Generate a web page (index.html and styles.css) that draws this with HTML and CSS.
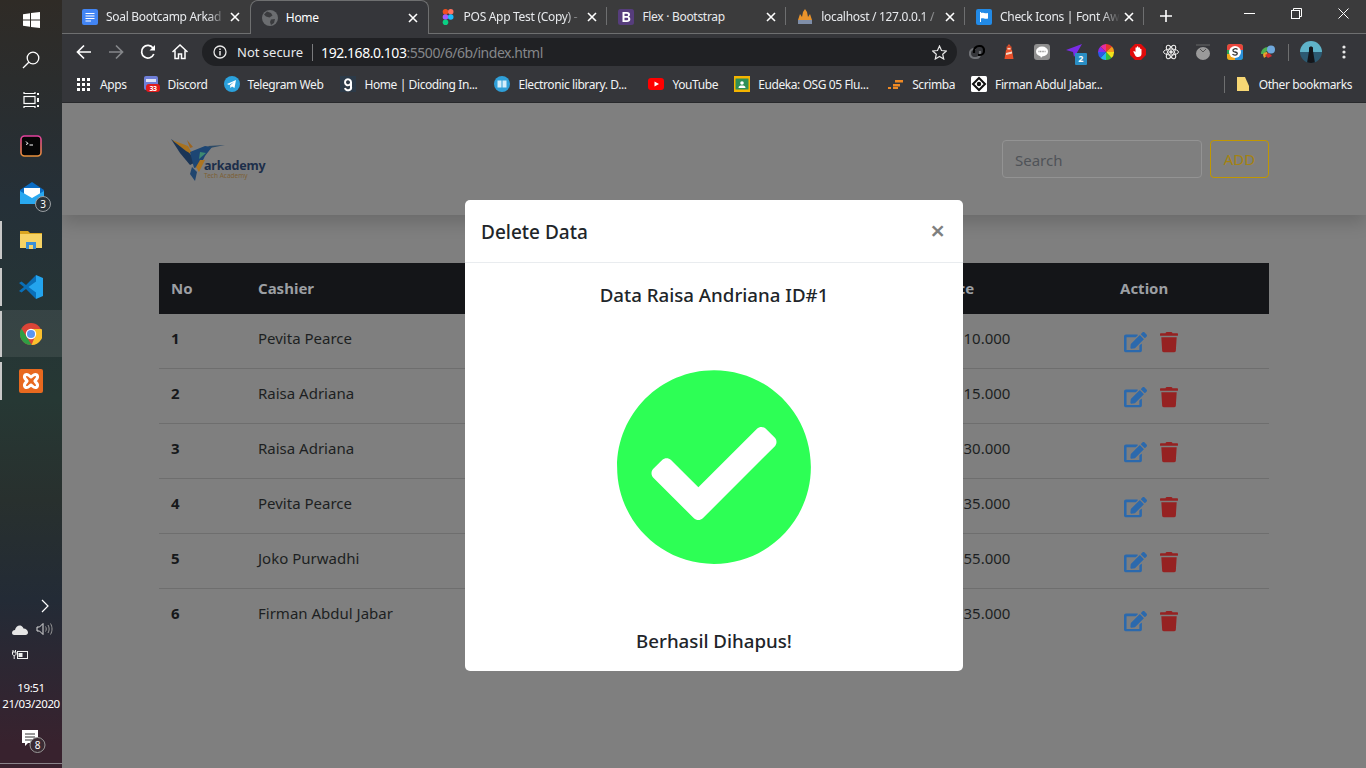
FILE: index.html
```html
<!DOCTYPE html>
<html lang="en">
<head>
  <meta charset="UTF-8">
  <title>Home</title>
  <link rel="stylesheet" href="styles.css">
</head>
<body>
  <svg class="sprite">
    <symbol id="i-edit" viewBox="0 0 576 512"><path d="M402.600 83.200l90.200 90.200c3.800 3.800 3.800 10 0 13.800L274.400 405.600l-92.800 10.300c-12.400 1.400-22.900-9.100-21.500-21.500l10.300-92.800L388.800 83.200c3.800-3.800 10-3.800 13.800 0zm162-22.900l-48.800-48.800c-15.200-15.200-39.900-15.200-55.200 0l-35.400 35.400c-3.800 3.800-3.800 10 0 13.800l90.200 90.200c3.800 3.800 10 3.800 13.800 0l35.400-35.400c15.200-15.300 15.200-40 0-55.200zM384 346.200V448H64V128h229.800c3.200 0 6.200-1.300 8.500-3.500l40-40c7.600-7.600 2.200-20.500-8.500-20.500H48C21.500 64 0 85.500 0 112v352c0 26.500 21.500 48 48 48h352c26.500 0 48-21.500 48-48V306.200c0-10.700-12.900-16-20.500-8.500l-40 40c-2.200 2.300-3.500 5.300-3.500 8.500z"/></symbol>
    <symbol id="i-trash" viewBox="0 0 448 512"><path d="M432 32H312l-9.400-18.700A24 24 0 0 0 281.100 0H166.800a23.720 23.720 0 0 0-21.400 13.300L136 32H16A16 16 0 0 0 0 48v32a16 16 0 0 0 16 16h416a16 16 0 0 0 16-16V48a16 16 0 0 0-16-16zM53.200 467a48 48 0 0 0 47.900 45h245.800a48 48 0 0 0 47.900-45L416 128H32z"/></symbol>
    <symbol id="i-close" viewBox="0 0 10 10"><path d="M1 1 9 9M9 1 1 9"/></symbol>
  </svg>

  <aside class="taskbar">
    <div class="tb-btn tb-short">
      <svg width="17" height="16" viewBox="0 0 17 16"><path fill="#fff" d="M0 2.3 7 1.3V7.6H0zM8 1.1 17 0V7.6H8zM0 8.5H7V14.8L0 13.8zM8 8.5H17V16L8 14.9z"/></svg>
    </div>
    <div class="tb-btn tb-short">
      <svg width="18" height="18" viewBox="0 0 18 18" fill="none" stroke="#fff" stroke-width="1.3"><circle cx="11" cy="7" r="5.8"/><path d="M6.8 11.2 1 17"/></svg>
    </div>
    <div class="tb-btn tb-short">
      <svg width="17" height="16" viewBox="0 0 17 16" fill="none" stroke="#fff" stroke-width="1.2"><path d="M1 0V1.5H12V0M1 16V14.5H12V16"/><rect x="1" y="4.5" width="11" height="7"/><path d="M15 1V3M15 6V10M15 13V15" stroke-width="2"/></svg>
    </div>
    <div class="tb-btn tb-app tb-first">
      <svg width="22" height="22" viewBox="0 0 22 22"><defs><linearGradient id="termBorder" x1="0" y1="0" x2="0" y2="1"><stop offset="0" stop-color="#e23f9e"/><stop offset="1" stop-color="#e8913a"/></linearGradient></defs><rect x="1" y="1" width="20" height="20" rx="3.5" fill="#060606" stroke="url(#termBorder)" stroke-width="1.6"/><path d="M6 6.5 8 8.5 6 9.5M9.5 10H13" fill="none" stroke="#fff" stroke-width="1"/></svg>
    </div>
    <div class="tb-btn tb-app">
      <svg width="34" height="32" viewBox="0 0 34 32" class="tb-mail"><path fill="#0a6cc4" d="M1 10 13 2 25 10V22H1z"/><path fill="#fff" d="M5 8H21V15L13 19 5 15z"/><path fill="#29a8f0" d="M1 11 13 18 25 11V24H1z"/><circle cx="24" cy="24" r="7.5" fill="#2a3238" stroke="#9a9fa3"/><text x="24" y="27.5" class="tb-badge-text">3</text></svg>
    </div>
    <div class="tb-btn tb-app tb-open">
      <svg width="22" height="20" viewBox="0 0 22 20"><path fill="#d9a520" d="M0 1H8L10 3H22V8H0z"/><path fill="#f6d365" d="M0 4H22V18H0z"/><rect x="6" y="12" width="10" height="7" fill="#3b8fd6"/><rect x="9" y="15" width="4" height="4" fill="#f6d365"/></svg>
    </div>
    <div class="tb-btn tb-app tb-open">
      <svg width="24" height="24" viewBox="0 0 24 24"><path fill="#0a6fb8" d="M17 0 7 10 2.500 6.500 0 8 5 12 0 16 2.500 17.500 7 14 17 24z"/><path fill="#23a4ee" d="M17 0 24 3V21L17 24V6.500L9.500 12 17 17.500z"/></svg>
    </div>
    <div class="tb-btn tb-app tb-open tb-active">
      <svg width="22" height="22" viewBox="0 0 22 22"><circle cx="11" cy="11" r="11" fill="#db4437"/><path fill="#fbc02d" d="M11 6H21.500A11 11 0 0 1 11.500 22L16 11z"/><path fill="#2f9e44" d="M1.500 5.500 6.500 13.500 11.500 22A11 11 0 0 1 1.500 5.500z"/><circle cx="11" cy="11" r="5.200" fill="#fff"/><circle cx="11" cy="11" r="4" fill="#5a95f0"/></svg>
    </div>
    <div class="tb-btn tb-app tb-open">
      <svg width="24" height="24" viewBox="0 0 24 24"><rect width="24" height="24" rx="2" fill="#e8691f"/><path fill="none" stroke="#fff" stroke-width="3" d="M6 6C9 4 10 7 12 8 14 7 15 4 18 6 20 9 17 10 16 12 17 14 20 15 18 18 15 20 14 17 12 16 10 17 9 20 6 18 4 15 7 14 8 12 7 10 4 9 6 6z"/></svg>
    </div>

    <div class="tray">
      <svg class="tray-chevron" width="10" height="14" viewBox="0 0 10 14" fill="none" stroke="#fff" stroke-width="1.2"><path d="M2 1 8 7 2 13"/></svg>
      <div class="tray-row">
        <svg width="16" height="11" viewBox="0 0 16 11"><path fill="#e6e6e6" d="M0 9C0 7 1.500 6 3 6 3.500 3 6 1 8.500 1.500 10 2 11 3 11.500 4.500 14 4.500 16 6.500 16 8.500 16 10 15 11 13.500 11H2C1 11 0 10 0 9z"/></svg>
        <svg width="17" height="14" viewBox="0 0 17 14" fill="none" stroke="#ddd" stroke-width="1"><path d="M1 5H3.500L7 1.500V12.500L3.500 9H1z"/><path d="M9.500 4.500C10.500 6 10.500 8 9.500 9.500M12 3C13.500 5.500 13.500 8.500 12 11M14.500 1.500C16.500 5 16.500 9 14.500 12.500" stroke="#999"/></svg>
      </div>
      <div class="tray-row tray-row-2">
        <svg width="17" height="11" viewBox="0 0 17 11" fill="none" stroke="#eee"><rect x="5.500" y="2.500" width="10" height="7"/><rect x="6.500" y="4" width="4" height="4" fill="#eee" stroke="none"/><path d="M1 1V3M3.500 1V3M0.500 3H4V5C4 6 3 6.500 2.200 6.500 1.400 6.500 0.500 6 0.500 5zM2.200 6.500V10"/></svg>
      </div>
      <div class="tray-clock">
        <span>19:51</span>
        <span>21/03/2020</span>
      </div>
      <div class="tray-notif">
        <svg width="28" height="24" viewBox="0 0 28 24"><path fill="#fff" d="M2 1H18V14H8L5 17V14H2z"/><path stroke="#333" d="M5 5H15M5 8H15M5 11H12"/><circle cx="17.500" cy="16" r="7.500" fill="#3a2b33" stroke="#9a9a9a"/><text x="17.500" y="19.500" class="tb-badge-text">8</text></svg>
      </div>
    </div>
  </aside>

  <div class="window">
    <div class="tabstrip">
      <div class="tab">
        <svg class="fav" viewBox="0 0 16 16"><rect width="16" height="16" rx="2" fill="#4285f4"/><path d="M3.500 4.500H12.500M3.500 7H12.500M3.500 9.500H12.500M3.500 12H9" stroke="#fff" stroke-width="1.200"/></svg>
        <span class="tab-title tab-fade">Soal Bootcamp Arkad</span>
        <svg class="tab-close"><use href="#i-close"/></svg>
      </div>
      <div class="tab tab-active">
        <svg class="fav" viewBox="0 0 16 16"><circle cx="8" cy="8" r="8" fill="#6b6d70"/><path fill="#3a3b3e" d="M5 1.500 9 3 10.500 5.500 7.500 7.500 4 6.500 2 4.500zM9 9.500 13 9 12 13 9 15 8 12z"/></svg>
        <span class="tab-title">Home</span>
        <svg class="tab-close"><use href="#i-close"/></svg>
      </div>
      <div class="tab tab-sep">
        <svg class="fav" viewBox="0 0 16 16"><circle cx="5.500" cy="2.800" r="2.800" fill="#f24e1e"/><rect x="8" width="5.500" height="5.500" rx="2.700" fill="#ff7262"/><circle cx="5.500" cy="8" r="2.800" fill="#a259ff"/><circle cx="10.700" cy="8" r="2.800" fill="#1abcfe"/><circle cx="5.500" cy="13.200" r="2.800" fill="#0acf83"/></svg>
        <span class="tab-title tab-fade">POS App Test (Copy) -</span>
        <svg class="tab-close"><use href="#i-close"/></svg>
      </div>
      <div class="tab tab-sep">
        <svg class="fav" viewBox="0 0 16 16"><rect width="16" height="16" rx="2.500" fill="#563d7c"/><path fill="#fff" fill-rule="evenodd" d="M4.500 3H9C11 3 12 4 12 5.500 12 6.700 11.300 7.400 10.400 7.700 11.600 7.900 12.300 8.800 12.300 10.200 12.300 12 11 13 9 13H4.500zM6.500 4.700V7.100H8.500C9.500 7.100 10 6.700 10 5.900 10 5.100 9.500 4.700 8.500 4.700zM6.500 8.700V11.300H8.700C9.700 11.300 10.200 10.800 10.200 10 10.200 9.200 9.700 8.700 8.700 8.700z"/></svg>
        <span class="tab-title">Flex · Bootstrap</span>
        <svg class="tab-close"><use href="#i-close"/></svg>
      </div>
      <div class="tab tab-sep">
        <svg class="fav" viewBox="0 0 16 16"><path fill="#e8932c" d="M1 11 3 5 5 8 6 3 8 0 10 3 11 8 13 5 15 11z"/><rect x="1" y="11" width="14" height="4" fill="#7f8ea8"/></svg>
        <span class="tab-title tab-fade">localhost / 127.0.0.1 /</span>
        <svg class="tab-close"><use href="#i-close"/></svg>
      </div>
      <div class="tab tab-sep tab-end">
        <svg class="fav" viewBox="0 0 16 16"><rect width="16" height="16" rx="2" fill="#228ae6"/><path fill="#fff" d="M4 3H5V13H4zM5 4C7 3 9 5 12 4V9.500C9 10.500 7 8.500 5 9.500z"/></svg>
        <span class="tab-title tab-fade">Check Icons | Font Aw</span>
        <svg class="tab-close"><use href="#i-close"/></svg>
      </div>
      <svg class="tab-new" width="12" height="12" viewBox="0 0 12 12"><path d="M6 0V12M0 6H12" stroke="#fff" stroke-width="1.600"/></svg>
      <div class="winctl">
        <svg width="11" height="11" viewBox="0 0 11 11"><path d="M0 5.500H11" stroke="#fff"/></svg>
        <svg width="11" height="11" viewBox="0 0 11 11" fill="none" stroke="#fff"><rect x="0.500" y="2.500" width="8" height="8"/><path d="M2.500 2.500V0.500H10.500V8.500H8.500"/></svg>
        <svg width="11" height="11" viewBox="0 0 11 11"><path d="M0.500 0.500 10.500 10.500M10.500 0.500 0.500 10.500" stroke="#fff"/></svg>
      </div>
    </div>

    <div class="toolbar">
      <div class="nav-btns">
        <svg width="16" height="16" viewBox="0 0 16 16" fill="none" stroke="#fff" stroke-width="1.700"><path d="M15 8H2M8 1.500 1.500 8 8 14.500"/></svg>
        <svg width="16" height="16" viewBox="0 0 16 16" fill="none" stroke="#85878a" stroke-width="1.700"><path d="M1 8H14M8 1.500 14.500 8 8 14.500"/></svg>
        <svg width="16" height="16" viewBox="0 0 16 16" fill="none" stroke="#fff" stroke-width="1.700"><path d="M13.800 10A6.300 6.300 0 1 1 13 4"/><path fill="#fff" stroke="none" d="M15 1V6.500H9.500z"/></svg>
        <svg width="16" height="16" viewBox="0 0 16 16" fill="none" stroke="#fff" stroke-width="1.500"><path d="M0.500 8 8 1 15.500 8M3 6.500V14.500H6.500V10H9.500V14.500H13V6.500"/></svg>
      </div>
      <div class="omnibox">
        <svg width="14" height="14" viewBox="0 0 14 14" fill="none" stroke="#e8e8e8" stroke-width="1.300"><circle cx="7" cy="7" r="6"/><path d="M7 6V10.500M7 3.500V5" stroke-width="1.500"/></svg>
        <span class="omni-secure">Not secure</span>
        <span class="omni-sep"></span>
        <span class="omni-url">192.168.0.103<span class="omni-dim">:5500/6/6b/index.html</span></span>
        <svg class="omni-star" width="15" height="15" viewBox="0 0 15 15" fill="none" stroke="#e8e8e8" stroke-width="1.200"><path d="M7.500 1 9.500 5.500 14.300 6 10.700 9.200 11.700 14 7.500 11.500 3.300 14 4.300 9.200 0.700 6 5.500 5.500z"/></svg>
      </div>
      <div class="extensions">
        <svg class="ext" viewBox="0 0 16 16" fill="none" stroke-width="2.200"><path stroke="#6f7175" d="M11 7V9A4 4 0 0 1 7 14H5A4 4 0 0 1 1 10V9A4 4 0 0 1 5 5H7"/><path stroke="#000" d="M5 9V7A5 5 0 0 1 10 2H11A4 4 0 0 1 15 6V7A4 4 0 0 1 11 11H9"/></svg>
        <svg class="ext" viewBox="0 0 16 16"><path fill="#e8502a" d="M5 6H11L12.500 15H3.500z"/><rect x="5.500" y="2.500" width="5" height="4" fill="#e8502a"/><path d="M8 0 10 2.500H6z" fill="#e8502a"/><rect x="6.500" y="4" width="3" height="1.500" fill="#f7d9c8"/><path d="M5 9 11 7.500V9.500L5 11z" fill="#f7d9c8"/></svg>
        <svg class="ext" viewBox="0 0 16 16"><rect width="16" height="16" rx="3" fill="#8f8f8f"/><ellipse cx="8" cy="7.500" rx="6" ry="5" fill="#fff"/><path d="M6 11H9L7 14z" fill="#fff"/><path d="M4.500 7.500H11.500" stroke="#8f8f8f" stroke-width="1.500" stroke-dasharray="1 .6"/></svg>
        <div class="ext-wrap">
          <svg class="ext" viewBox="0 0 16 16"><path fill="#7b2ce8" d="M0 6 16 0 9 12 7 8zM7 8 16 0 8 13z"/></svg>
          <span class="ext-count">2</span>
        </div>
        <svg class="ext" viewBox="0 0 16 16"><path fill="#e8362c" d="M8 8V0A8 8 0 0 1 14 2.500z"/><path fill="#f59b1c" d="M8 8 14 2.500A8 8 0 0 1 16 8z"/><path fill="#f2e21a" d="M8 8H16A8 8 0 0 1 13.500 14z"/><path fill="#34c13a" d="M8 8 13.500 14A8 8 0 0 1 8 16z"/><path fill="#27b5e8" d="M8 8V16A8 8 0 0 1 2.500 14z"/><path fill="#2a5ae8" d="M8 8 2.500 14A8 8 0 0 1 0 8z"/><path fill="#8a2ce8" d="M8 8H0A8 8 0 0 1 2.500 2.500z"/><path fill="#e82c9a" d="M8 8 2.500 2.500A8 8 0 0 1 8 0z"/></svg>
        <svg class="ext" viewBox="0 0 16 16"><path fill="#e00b0b" d="M5 0H11L16 5V11L11 16H5L0 11V5z"/><path fill="#fff" d="M4 7 5.500 8V4C5.500 3 6.500 3 6.800 4V3C7 2 8.200 2 8.400 3V4C8.700 3 9.800 3 10 4V5C10.500 4.500 11.500 4.700 11.500 5.500V10C11.500 12 10 13 8 13 6.500 13 5.500 12.500 5 11L3.500 8C3.300 7 3.500 6.700 4 7z"/></svg>
        <svg class="ext" viewBox="0 0 16 16" fill="none" stroke="#e8e8e8" stroke-width="1"><rect width="16" height="16" fill="#2f3033" stroke="none"/><ellipse cx="8" cy="8" rx="7.500" ry="3"/><ellipse cx="8" cy="8" rx="7.500" ry="3" transform="rotate(60 8 8)"/><ellipse cx="8" cy="8" rx="7.500" ry="3" transform="rotate(120 8 8)"/><circle cx="8" cy="8" r="1.300" fill="#e8e8e8"/></svg>
        <svg class="ext" viewBox="0 0 16 16"><path d="M1 1H15" stroke="#666" stroke-width="1"/><ellipse cx="8" cy="9.500" rx="7" ry="6.500" fill="#9a9a9a"/><path d="M5 5 8 8 11 5" stroke="#555" fill="none"/></svg>
        <svg class="ext" viewBox="0 0 16 16"><rect width="16" height="16" rx="3" fill="#2da44e"/><path fill="#e8453c" d="M3 0H13A3 3 0 0 1 16 3V6H0V3A3 3 0 0 1 3 0z"/><path fill="#2a8fd8" d="M16 6V13A3 3 0 0 1 13 16H8V6z"/><path fill="#f2a81c" d="M0 10H8V16H3A3 3 0 0 1 0 13z"/><circle cx="8" cy="8" r="6" fill="#fff"/><path d="M10.500 5.500C9 4 5.500 4.800 6 6.800 6.400 8.500 10.500 7.500 10.300 9.600 10 11.500 6.500 11.500 5.500 10" fill="none" stroke="#333" stroke-width="1.300"/></svg>
        <svg class="ext" viewBox="0 0 16 16"><path fill="#4caf50" d="M1 10C1 6 4 3 8 3L8 7C6 7 5 8 5 10z"/><path fill="#e8a32c" d="M3 11C3 9 5 8 7 8L8 11 4 14z"/><path fill="#d32f2f" d="M5 11 9 9 12 12 8 14z"/><circle cx="11" cy="5.500" r="4" fill="#6fa8dc"/></svg>
        <span class="ext-sep"></span>
        <svg class="avatar" viewBox="0 0 22 22"><defs><clipPath id="avatarClip"><circle cx="11" cy="11" r="11"/></clipPath></defs><g clip-path="url(#avatarClip)"><rect width="22" height="11" fill="#5fb3c9"/><rect y="11" width="22" height="11" fill="#2c5a72"/><path fill="#14161a" d="M9 7C9 5 13 5 13 7V10L15 22H7L9 10z"/></g></svg>
        <svg class="menu-dots" width="4" height="14" viewBox="0 0 4 14"><circle cx="2" cy="2" r="1.600" fill="#e8e8e8"/><circle cx="2" cy="7" r="1.600" fill="#e8e8e8"/><circle cx="2" cy="12" r="1.600" fill="#e8e8e8"/></svg>
      </div>
    </div>

    <div class="bookmarks">
      <a class="bm bm-first">
        <svg class="bm-icon bm-apps" viewBox="0 0 13 13" fill="#fff"><rect width="3" height="3"/><rect x="5" width="3" height="3"/><rect x="10" width="3" height="3"/><rect y="5" width="3" height="3"/><rect x="5" y="5" width="3" height="3"/><rect x="10" y="5" width="3" height="3"/><rect y="10" width="3" height="3"/><rect x="5" y="10" width="3" height="3"/><rect x="10" y="10" width="3" height="3"/></svg>
        Apps
      </a>
      <a class="bm">
        <svg class="bm-icon" viewBox="0 0 16 16"><rect y="0" width="14" height="14" rx="2" fill="#6f7fd8"/><rect x="2" y="3" width="10" height="3" fill="#dfe3f7"/><rect x="2" y="8" width="14" height="8" rx="3" fill="#e01b1b"/><text x="9" y="15" class="bm-cal">33</text></svg>
        Discord
      </a>
      <a class="bm bm-first">
        <svg class="bm-icon" viewBox="0 0 16 16"><circle cx="8" cy="8" r="8" fill="#2ba1dc"/><path fill="#fff" d="M3 8 12 4 10.500 12 8 10.500 6.500 12 6 9.500 10 6 5 9z"/></svg>
        Telegram Web
      </a>
      <a class="bm bm-long">
        <svg class="bm-icon" viewBox="0 0 16 16"><rect width="16" height="16" fill="#2c3a48"/><path d="M11 6.500A3 3 0 1 1 11 6V10.500A3 3 0 0 1 5 12" fill="none" stroke="#fff" stroke-width="2"/></svg>
        Home | Dicoding In...
      </a>
      <a class="bm bm-long">
        <svg class="bm-icon" viewBox="0 0 16 16"><circle cx="8" cy="8" r="8" fill="#2f9fd8"/><path d="M3.500 4.500H7.500V11.500H3.500zM8.500 4.500H12.500V11.500H8.500z" fill="#d5eefb"/></svg>
        Electronic library. D...
      </a>
      <a class="bm">
        <svg class="bm-icon" viewBox="0 0 16 16"><rect y="2" width="16" height="12" rx="3" fill="#f00"/><path d="M6.500 5.500 11 8 6.500 10.500z" fill="#fff"/></svg>
        YouTube
      </a>
      <a class="bm bm-long">
        <svg class="bm-icon" viewBox="0 0 16 16"><rect width="16" height="16" fill="#f4b400"/><rect x="1.500" y="2.500" width="13" height="11" fill="#2d8f57"/><circle cx="8" cy="7" r="1.800" fill="#fff"/><path d="M4.500 12C4.500 10 6 9.500 8 9.500S11.500 10 11.500 12z" fill="#fff"/></svg>
        Eudeka: OSG 05 Flu...
      </a>
      <a class="bm">
        <svg class="bm-icon" viewBox="0 0 16 16" fill="#f08a24"><rect x="7" y="4" width="8" height="2.500"/><rect x="5" y="8" width="7" height="2.500"/><rect x="0" y="11" width="3" height="2"/><rect x="5" y="11" width="5" height="2"/></svg>
        Scrimba
      </a>
      <a class="bm bm-long">
        <svg class="bm-icon" viewBox="0 0 16 16"><rect width="16" height="16" rx="1.500" fill="#fff"/><path d="M8 2 14 8 8 14 2 8z" fill="none" stroke="#111" stroke-width="2"/><circle cx="8" cy="8" r="2.200" fill="#111"/></svg>
        Firman Abdul Jabar...
      </a>
      <span class="bm-sep"></span>
      <a class="bm bm-other">
        <svg class="bm-icon bm-folder" viewBox="0 0 12 14"><path fill="#f7d774" d="M0 0H8L12 9V14H0z"/></svg>
        Other bookmarks
      </a>
    </div>

    <main class="page">
      <nav class="navbar">
        <div class="container nav-inner">
          <div class="logo">
            <svg width="56" height="44" viewBox="170 135 56 44">
              <polygon fill="#1b3556" points="171,137 188,149 196,160 190,163 180,151"/>
              <polygon fill="#a8721f" points="172,138 188,144 193,153 186,149"/>
              <polygon fill="#9c6420" points="187,138 193,145 190,146"/>
              <polygon fill="#1d4674" points="190,150 205,144 212,145 205,154 200,164 194,166"/>
              <polygon fill="#2c4a66" points="208,144 225,143 210,146"/>
              <polygon fill="#3d8a72" points="200,150 206,151 199,157"/>
              <polygon fill="#ad7420" points="205,158 199,170 196,165 200,158"/>
              <polygon fill="#20456e" points="192,165 197,170 195,179 190,172"/>
            </svg>
            <div class="logo-text">
              <span class="logo-name">arkademy</span>
              <span class="logo-sub">Tech Academy</span>
            </div>
          </div>
          <form class="nav-form">
            <input class="search" type="text" placeholder="Search">
            <button class="btn-add" type="button">ADD</button>
          </form>
        </div>
      </nav>

      <div class="container">
        <table class="data-table">
          <colgroup>
            <col class="col-no"><col class="col-cashier"><col class="col-hidden"><col class="col-price"><col class="col-action">
          </colgroup>
          <thead>
            <tr><th>No</th><th>Cashier</th><th></th><th>Price</th><th>Action</th></tr>
          </thead>
          <tbody>
            <tr>
              <th>1</th><td>Pevita Pearce</td><td></td><td>Rp. 10.000</td>
              <td class="cell-actions"><svg class="ico-edit"><use href="#i-edit"/></svg><svg class="ico-trash"><use href="#i-trash"/></svg></td>
            </tr>
            <tr>
              <th>2</th><td>Raisa Adriana</td><td></td><td>Rp. 15.000</td>
              <td class="cell-actions"><svg class="ico-edit"><use href="#i-edit"/></svg><svg class="ico-trash"><use href="#i-trash"/></svg></td>
            </tr>
            <tr>
              <th>3</th><td>Raisa Adriana</td><td></td><td>Rp. 30.000</td>
              <td class="cell-actions"><svg class="ico-edit"><use href="#i-edit"/></svg><svg class="ico-trash"><use href="#i-trash"/></svg></td>
            </tr>
            <tr>
              <th>4</th><td>Pevita Pearce</td><td></td><td>Rp. 35.000</td>
              <td class="cell-actions"><svg class="ico-edit"><use href="#i-edit"/></svg><svg class="ico-trash"><use href="#i-trash"/></svg></td>
            </tr>
            <tr>
              <th>5</th><td>Joko Purwadhi</td><td></td><td>Rp. 55.000</td>
              <td class="cell-actions"><svg class="ico-edit"><use href="#i-edit"/></svg><svg class="ico-trash"><use href="#i-trash"/></svg></td>
            </tr>
            <tr class="row-last">
              <th>6</th><td>Firman Abdul Jabar</td><td></td><td>Rp. 35.000</td>
              <td class="cell-actions"><svg class="ico-edit"><use href="#i-edit"/></svg><svg class="ico-trash"><use href="#i-trash"/></svg></td>
            </tr>
          </tbody>
        </table>
      </div>

      <div class="modal">
        <div class="modal-header">
          <h5 class="modal-title">Delete Data</h5>
          <span class="modal-close">×</span>
        </div>
        <div class="modal-body">
          <h5 class="modal-text">Data Raisa Andriana ID#1</h5>
          <svg class="ico-check" viewBox="0 0 512 512"><path d="M504 256c0 136.967-111.033 248-248 248S8 392.967 8 256 119.033 8 256 8s248 111.033 248 248zM227.314 387.314l184-184c6.248-6.248 6.248-16.379 0-22.627l-22.627-22.627c-6.248-6.249-16.379-6.249-22.628 0L216 308.118l-70.059-70.059c-6.248-6.248-16.379-6.248-22.628 0l-22.627 22.627c-6.248 6.248-6.248 16.379 0 22.627l104 104c6.249 6.249 16.379 6.249 22.628.001z"/></svg>
          <h5 class="modal-text">Berhasil Dihapus!</h5>
        </div>
      </div>
    </main>
  </div>
</body>
</html>
```

FILE: styles.css
```css
* {
  box-sizing: border-box;
}
html, body {
  height: 100%;
}
body {
  margin: 0;
  display: flex;
  overflow: hidden;
  font-family: "Noto Sans", "Open Sans", sans-serif;
  background: #7f7f7f;
}
.sprite {
  display: none;
}

/* windows taskbar on the left */
.taskbar {
  width: 62px;
  flex: none;
  height: 768px;
  display: flex;
  flex-direction: column;
  color: #fff;
  background: linear-gradient(#2f2b26 0, #253038 200px, #263834 400px, #28302e 500px, #232b36 600px, #38222e 745px);
}
.tb-btn {
  display: flex;
  align-items: center;
  justify-content: center;
  position: relative;
}
.tb-short {
  height: 40px;
}
.tb-app {
  height: 47px;
}
.tb-first {
  margin-top: 2px;
}
.tb-mail {
  position: relative;
  left: 5px;
  top: 3px;
}
.tb-open::before {
  content: "";
  position: absolute;
  left: 0;
  top: 5px;
  bottom: 4px;
  width: 2px;
  background: #c8c8c8;
}
.tb-active {
  background: rgba(255, 255, 255, .08);
}
.tb-active::before {
  top: 1px;
  bottom: 0;
}
.tb-badge-text {
  font-size: 10px;
  fill: #fff;
  text-anchor: middle;
}
.tray {
  margin-top: auto;
  display: flex;
  flex-direction: column;
  align-items: center;
  padding-bottom: 8px;
  border-bottom: 1px solid #8a848a;
  margin-bottom: 4px;
}
.tray-chevron {
  align-self: flex-end;
  margin-right: 12px;
}
.tray-row {
  width: 100%;
  display: flex;
  align-items: center;
  gap: 8px;
  padding-left: 12px;
  margin-top: 9px;
}
.tray-row-2 {
  margin-top: 13px;
}
.tray-clock {
  display: flex;
  flex-direction: column;
  align-items: center;
  font-size: 11.5px;
  line-height: 16px;
  margin-top: 20px;
  white-space: nowrap;
  letter-spacing: -.35px;
}
.tray-notif {
  margin-top: 17px;
  height: 26px;
  padding-left: 6px;
}

/* chrome */
.window {
  flex: 1;
  min-width: 0;
  height: 768px;
  display: flex;
  flex-direction: column;
}
.tabstrip {
  height: 34px;
  flex: none;
  display: flex;
  align-items: stretch;
  padding-left: 9px;
  background: #3b3b3c;
  border-bottom: 1px solid #6e6f70;
  color: #e8eaed;
  font-size: 12px;
  letter-spacing: -.3px;
}
.tab {
  width: 178.8px;
  height: 33px;
  flex: none;
  display: flex;
  align-items: center;
  padding: 0 10px 0 11px;
  position: relative;
  white-space: nowrap;
}
.tab-sep::before,
.tab-end::after {
  content: "";
  position: absolute;
  left: -1px;
  top: 7px;
  bottom: 8px;
  width: 1px;
  background: #6e6f70;
}
.tab-end::after {
  left: auto;
  right: 0;
}
.tab-active + .tab-sep::before {
  display: none;
}
.tab-active {
  height: 34px;
  background: #35363a;
  border: 1px solid #6e6f70;
  border-bottom: none;
  border-radius: 8px 8px 0 0;
  z-index: 1;
  color: #fff;
}
.fav {
  width: 16px;
  height: 16px;
  flex: none;
}
.tab-title {
  flex: 1;
  min-width: 0;
  margin-left: 8px;
}
.tab-fade {
  -webkit-mask-image: linear-gradient(to right, #000 85%, transparent 100%);
  mask-image: linear-gradient(to right, #000 85%, transparent 100%);
}
.tab-close {
  width: 10px;
  height: 10px;
  flex: none;
  margin-left: 4px;
  fill: none;
  stroke: #fff;
  stroke-width: 1.6;
}
.tab-new {
  margin: 10px 0 0 16px;
}
.winctl {
  margin-left: auto;
  width: 105px;
  margin-right: 17px;
  display: flex;
  justify-content: space-between;
  padding-top: 8px;
}
.toolbar {
  height: 36px;
  flex: none;
  display: flex;
  align-items: center;
  background: #35363a;
  color: #e8eaed;
}
.nav-btns {
  width: 140px;
  padding-left: 14px;
  display: flex;
  gap: 16px;
}
.omnibox {
  width: 755px;
  height: 28px;
  flex: none;
  display: flex;
  align-items: center;
  padding: 0 10px 0 11px;
  border-radius: 14px;
  background: #202124;
  font-size: 13px;
}
.omni-secure {
  margin-left: 10px;
}
.omni-sep {
  width: 1px;
  height: 17px;
  margin: 0 8px 0 9px;
  background: #7a7b7d;
}
.omni-url {
  color: #fff;
  font-size: 14px;
  letter-spacing: -.46px;
}
.omni-dim {
  color: #85878a;
}
.omni-star {
  margin-left: auto;
}
.extensions {
  flex: 1;
  display: flex;
  align-items: center;
  padding-left: 12px;
  gap: 16.300px;
}
.ext {
  width: 16px;
  height: 16px;
  flex: none;
  display: block;
}
.ext-wrap {
  position: relative;
}
.ext-count {
  position: absolute;
  left: 9px;
  top: 9px;
  width: 12px;
  height: 12px;
  background: #2a8ec4;
  color: #fff;
  font-size: 9px;
  line-height: 12px;
  font-weight: 700;
  text-align: center;
  border-radius: 1px;
}
.ext-sep {
  width: 1px;
  height: 17px;
  margin: 0 -5px 0 -4px;
  background: #6e6f70;
}
.avatar {
  width: 22px;
  height: 22px;
  flex: none;
  margin-right: -2px;
}
.menu-dots {
  flex: none;
  margin-left: 5px;
}
.bookmarks {
  height: 33px;
  flex: none;
  display: flex;
  align-items: center;
  padding: 0 14px 4px 15px;
  background: #35363a;
  border-bottom: 1px solid #28292c;
  color: #f1f3f4;
  font-size: 12px;
  letter-spacing: -.4px;
  white-space: nowrap;
}
.bm {
  display: flex;
  align-items: center;
  gap: 8px;
  margin-right: 16px;
}
.bm-first {
  margin-right: 17px;
}
/* chrome cuts long bookmark names at a fixed width */
.bm-long {
  width: 136px;
  margin-right: 18px;
}
.bm-icon {
  width: 16px;
  height: 16px;
  flex: none;
}
.bm-apps {
  width: 13px;
  height: 13px;
  margin-right: 2px;
}
.bm-folder {
  width: 12px;
  height: 14px;
  margin-right: 2px;
}
.bm-cal {
  font-size: 7px;
  font-weight: 700;
  fill: #fff;
  text-anchor: middle;
}
.bm-sep {
  width: 1px;
  height: 17px;
  margin-left: auto;
  margin-right: 12px;
  background: #6e6f70;
}
.bm-other {
  margin-right: 0;
}

/* page behind the backdrop, colours already dimmed */
.page {
  flex: 1;
  position: relative;
  background: #7f7f7f;
  color: #1d1f22;
  font-size: 15px;
  overflow: hidden;
}
.container {
  width: 1110px;
  margin: 0 auto;
}
.navbar {
  height: 112px;
  background: #7f7f7f;
  box-shadow: 0 8px 16px rgba(0, 0, 0, .16);
}
.nav-inner {
  height: 100%;
  display: flex;
  align-items: center;
  justify-content: space-between;
}
.logo {
  display: flex;
  align-items: flex-end;
  margin-left: 11px;
  height: 44px;
}
.logo svg {
  margin-right: -22px;
}
.logo-text {
  display: flex;
  flex-direction: column;
  padding-bottom: 1px;
}
.logo-name {
  font-size: 12.500px;
  line-height: 13px;
  font-weight: 700;
  letter-spacing: -.2px;
  color: #1c2e4a;
}
.logo-sub {
  font-size: 6.500px;
  line-height: 8px;
  color: #7d5f35;
}
.nav-form {
  display: flex;
  gap: 8px;
}
.search {
  width: 200px;
  height: 38px;
  padding: 7px 12px 5px;
  font: inherit;
  color: #4f5358;
  background: #7f7f7f;
  border: 1px solid #939393;
  border-radius: 4px;
}
.search::placeholder {
  color: #4f5358;
  opacity: 1;
}
.btn-add {
  width: 59px;
  height: 38px;
  padding: 0;
  font: inherit;
  color: #a58310;
  background: transparent;
  border: 1px solid #c19700;
  border-radius: 4px;
}
.data-table {
  width: 1110px;
  margin-top: 48px;
  table-layout: fixed;
  border-collapse: separate;
  border-spacing: 0;
}
.col-no { width: 87px; }
.col-cashier { width: 300px; }
.col-hidden { width: 379px; }
.col-price { width: 183px; }
.col-action { width: 161px; }
.data-table thead th {
  height: 51px;
  padding: 11px 12px 13px;
  text-align: left;
  font-weight: 700;
  color: #9c9fa3;
  background: #141518;
}
.data-table tbody th,
.data-table tbody td {
  height: 55px;
  padding: 12px;
  line-height: 24px;
  text-align: left;
  vertical-align: top;
  border-bottom: 1px solid #6e6e6e;
}
.data-table tbody th {
  font-weight: 700;
  color: #16181a;
}
.data-table .row-last th,
.data-table .row-last td {
  border-bottom: none;
}
.data-table .cell-actions {
  padding: 18px 0 0 16px;
  line-height: 0;
}
.data-table .row-last .cell-actions {
  padding-top: 22px;
}
.ico-edit {
  width: 23px;
  height: 20.500px;
  fill: #2b69ad;
  margin-right: 13px;
}
.ico-trash {
  width: 18px;
  height: 20.500px;
  fill: #962222;
}
.modal {
  position: absolute;
  left: 403px;
  top: 97px;
  width: 498px;
  height: 471px;
  background: #fff;
  border-radius: 5px;
  color: #212529;
}
.modal-header {
  height: 63px;
  display: flex;
  align-items: center;
  justify-content: space-between;
  padding: 2px 18px 0 16px;
  border-bottom: 1px solid #e9ecef;
}
.modal-title {
  margin: 0;
  font-size: 19px;
  font-weight: 500;
}
.modal-close {
  font-size: 26px;
  font-weight: 600;
  line-height: 1;
  color: #7f7f7f;
  position: relative;
  top: -2px;
}
.modal-body {
  display: flex;
  flex-direction: column;
  align-items: center;
  padding-top: 19px;
}
.modal-text {
  margin: 0;
  font-size: 18.700px;
  line-height: 26px;
  font-weight: 500;
}
.ico-check {
  width: 200px;
  height: 200px;
  fill: #2dff55;
  margin: 59px 0 61px;
}
```
